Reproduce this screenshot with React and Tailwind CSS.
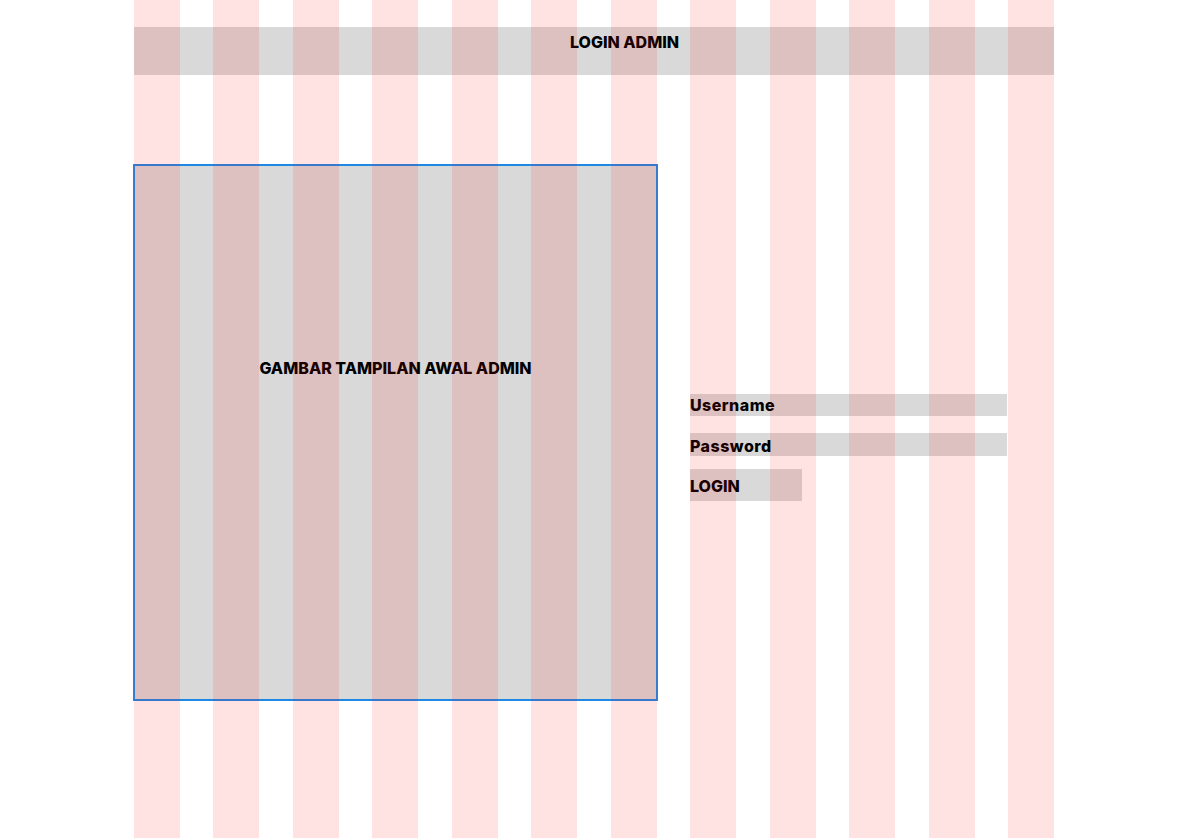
import React from 'react';

const columns = Array.from({ length: 12 });

const App = () => {
  return (
    <div className="relative min-h-screen h-[838px] bg-white overflow-hidden font-['Inter',sans-serif] text-black">
      {/* page content */}
      <div className="w-[920px] mx-auto pt-[27px]">
        {/* header bar */}
        <div className="h-[48px] bg-[#d9d9d9] pt-[3px] pl-[61px] text-center">
          <h1 className="text-[16px] leading-[24px] font-extrabold">LOGIN ADMIN</h1>
        </div>

        {/* main area */}
        <div className="flex mt-[89px]">
          {/* image placeholder */}
          <div className="-ml-px w-[525px] h-[537px] border-2 border-[#1e88e5] bg-[#d9d9d9] pt-[190px] text-center">
            <p className="text-[16px] leading-[24px] font-extrabold">GAMBAR TAMPILAN AWAL ADMIN</p>
          </div>

          {/* login form */}
          <div className="ml-[32px] pt-[230px] w-[317px] flex flex-col">
            <div className="h-[22px] bg-[#d9d9d9] flex items-center">
              <span className="text-[16px] font-extrabold tracking-[0.03em]">Username</span>
            </div>
            <div className="h-[23px] mt-[17px] bg-[#d9d9d9] flex items-center">
              <span className="text-[16px] font-extrabold tracking-[0.03em] translate-y-px">Password</span>
            </div>
            <button className="mt-[13px] w-[112px] h-[32px] bg-[#d9d9d9] flex items-center text-left">
              <span className="text-[16px] font-extrabold translate-y-px">LOGIN</span>
            </button>
          </div>
        </div>
      </div>

      {/* 12 column grid overlay */}
      <div className="absolute inset-y-0 left-1/2 -translate-x-1/2 w-[920px] grid grid-cols-12 gap-x-[33.45px] pointer-events-none">
        {columns.map((_, i) => (
          <div key={i} className="bg-[#ff0000]/[0.11]" />
        ))}
      </div>
    </div>
  );
};

export default App;
